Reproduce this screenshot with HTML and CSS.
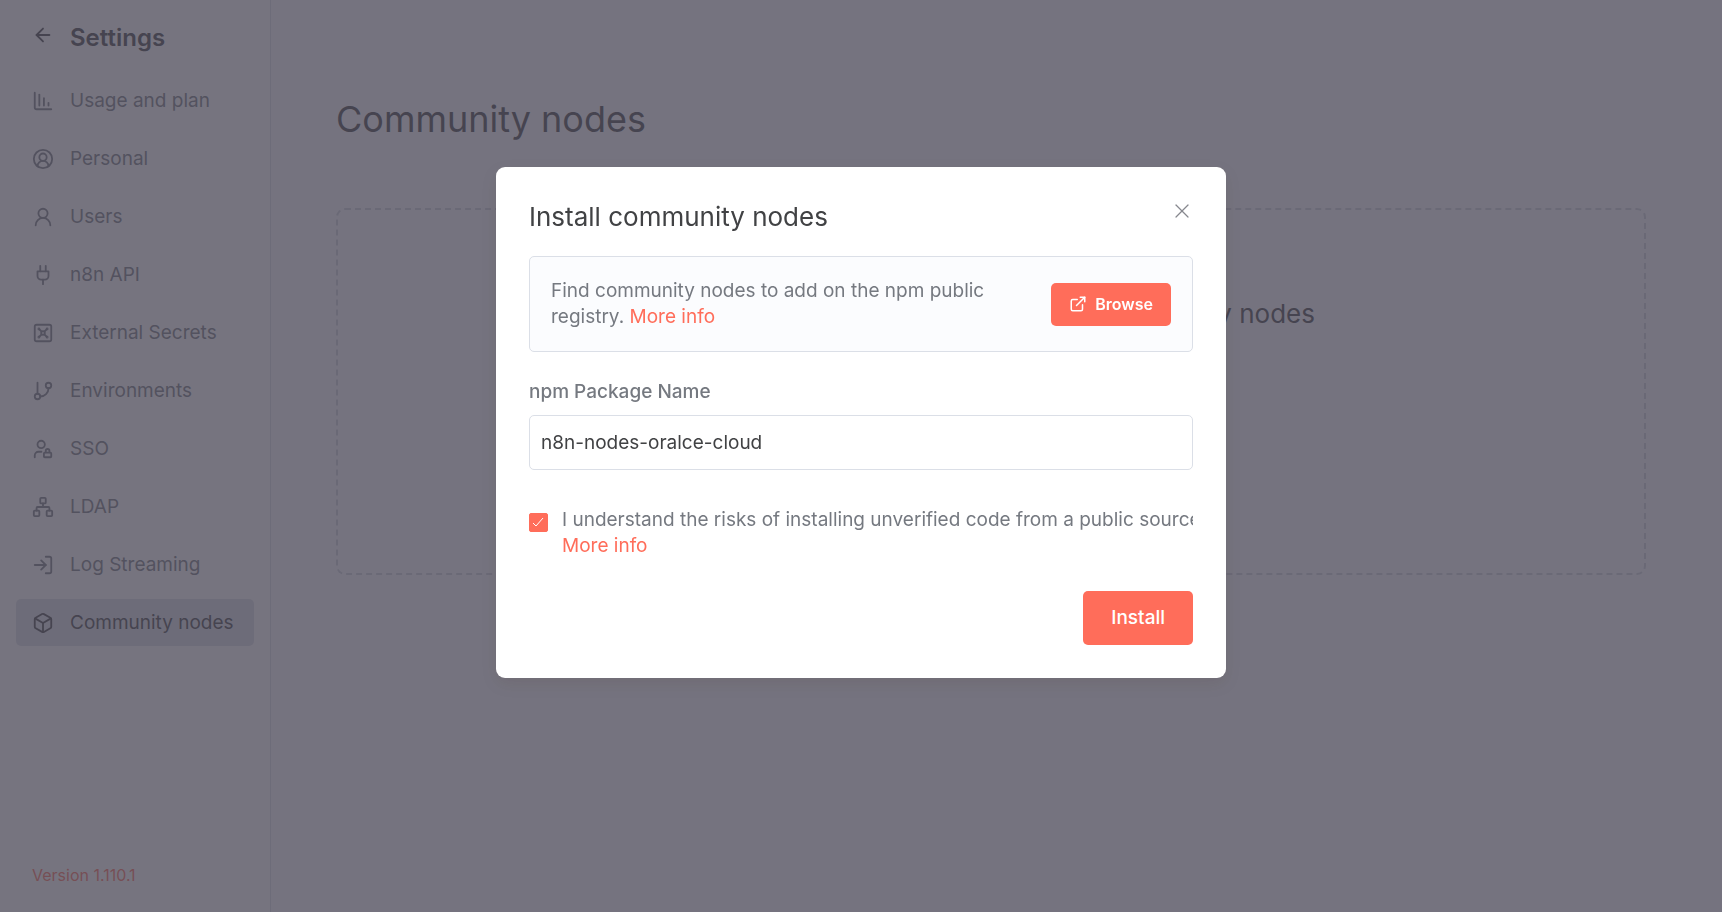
FILE: index.html
```html
<!DOCTYPE html>
<html lang="en">
<head>
<meta charset="utf-8">
<meta name="viewport" content="width=device-width, initial-scale=1">
<title>Community nodes - Settings</title>
<link rel="stylesheet" href="styles.css">
</head>
<body>
<div class="app">
  <aside class="sidebar">
    <header class="sidebar-header">
      <button class="icon-button" type="button" aria-label="Back">
        <svg class="icon" viewBox="0 0 24 24"><path d="m12 19-7-7 7-7"/><path d="M19 12H5"/></svg>
      </button>
      <h2 class="sidebar-title">Settings</h2>
    </header>
    <nav class="menu">
      <a class="menu-item" href="#"><svg class="icon" viewBox="0 0 24 24"><path d="M13 17V9"/><path d="M18 17v-3"/><path d="M3 3v16a2 2 0 0 0 2 2h16"/><path d="M8 17V5"/></svg>Usage and plan</a>
      <a class="menu-item" href="#"><svg class="icon" viewBox="0 0 24 24"><path d="M18 20a6 6 0 0 0-12 0"/><circle cx="12" cy="10" r="4"/><circle cx="12" cy="12" r="10"/></svg>Personal</a>
      <a class="menu-item" href="#"><svg class="icon" viewBox="0 0 24 24"><circle cx="12" cy="8" r="5"/><path d="M20 21a8 8 0 0 0-16 0"/></svg>Users</a>
      <a class="menu-item" href="#"><svg class="icon" viewBox="0 0 24 24"><path d="M12 22v-5"/><path d="M9 8V2"/><path d="M15 8V2"/><path d="M18 8v5a4 4 0 0 1-4 4h-4a4 4 0 0 1-4-4V8Z"/></svg>n8n API</a>
      <a class="menu-item" href="#"><svg class="icon" viewBox="0 0 24 24"><rect width="18" height="18" x="3" y="3" rx="2"/><circle cx="7.5" cy="7.5" r=".5"/><path d="m7.9 7.9 2.7 2.7"/><circle cx="16.5" cy="7.5" r=".5"/><path d="m13.4 10.6 2.7-2.7"/><circle cx="7.5" cy="16.5" r=".5"/><path d="m7.9 16.1 2.7-2.7"/><circle cx="16.5" cy="16.5" r=".5"/><path d="m13.4 13.4 2.7 2.7"/><circle cx="12" cy="12" r="2"/></svg>External Secrets</a>
      <a class="menu-item" href="#"><svg class="icon" viewBox="0 0 24 24"><path d="M6 3v12"/><circle cx="18" cy="6" r="3"/><circle cx="6" cy="18" r="3"/><path d="M18 9a9 9 0 0 1-9 9"/></svg>Environments</a>
      <a class="menu-item" href="#"><svg class="icon" viewBox="0 0 24 24"><circle cx="10" cy="7" r="4"/><path d="M10.3 15H7a4 4 0 0 0-4 4v2"/><path d="M15 15.5V14a2 2 0 0 1 4 0v1.5"/><rect width="8" height="5" x="13" y="16" rx=".9"/></svg>SSO</a>
      <a class="menu-item" href="#"><svg class="icon" viewBox="0 0 24 24"><rect x="16" y="16" width="6" height="6" rx="1"/><rect x="2" y="16" width="6" height="6" rx="1"/><rect x="9" y="2" width="6" height="6" rx="1"/><path d="M5 16v-3a1 1 0 0 1 1-1h12a1 1 0 0 1 1 1v3"/><path d="M12 12V8"/></svg>LDAP</a>
      <a class="menu-item" href="#"><svg class="icon" viewBox="0 0 24 24"><path d="m10 17 5-5-5-5"/><path d="M15 12H3"/><path d="M15 3h4a2 2 0 0 1 2 2v14a2 2 0 0 1-2 2h-4"/></svg>Log Streaming</a>
      <a class="menu-item menu-item-active" href="#" aria-current="page"><svg class="icon" viewBox="0 0 24 24"><path d="M21 8a2 2 0 0 0-1-1.73l-7-4a2 2 0 0 0-2 0l-7 4A2 2 0 0 0 3 8v8a2 2 0 0 0 1 1.73l7 4a2 2 0 0 0 2 0l7-4A2 2 0 0 0 21 16Z"/><path d="m3.3 7 8.7 5 8.7-5"/><path d="M12 22V12"/></svg>Community nodes</a>
    </nav>
    <a class="version" href="#">Version 1.110.1</a>
  </aside>
  <main class="content">
    <h1 class="page-title">Community nodes</h1>
    <section class="empty-state">
      <h2 class="empty-title">Supercharge your workflows with community nodes</h2>
    </section>
  </main>
</div>

<div class="overlay">
  <form class="modal" role="dialog" aria-modal="true" aria-labelledby="modal-title">
    <header class="modal-header">
      <h2 class="modal-title" id="modal-title">Install community nodes</h2>
      <button class="icon-button close" type="button" aria-label="Close">
        <svg class="icon" viewBox="0 0 22 22"><path d="m5 5 12 12"/><path d="M17 5 5 17"/></svg>
      </button>
    </header>
    <div class="notice">
      <p class="notice-text">Find community nodes to add on the npm public registry. <a class="link" href="#">More info</a></p>
      <button class="button button-browse" type="button">
        <svg class="icon" viewBox="0 0 24 24"><path d="M15 3h6v6"/><path d="M10 14 21 3"/><path d="M18 13v6a2 2 0 0 1-2 2H5a2 2 0 0 1-2-2V8a2 2 0 0 1 2-2h6"/></svg>
        Browse
      </button>
    </div>
    <label class="field-label" for="package">npm Package Name</label>
    <input class="field" id="package" type="text" value="n8n-nodes-oralce-cloud">
    <div class="consent">
      <span class="check">
        <input class="check-input" id="risks" type="checkbox" checked>
        <svg class="check-mark" viewBox="0 0 19 19"><path d="m4 10 3 3 7-8"/></svg>
      </span>
      <label class="consent-text" for="risks">I understand the risks of installing unverified code from a public source.<br><a class="link" href="#">More info</a></label>
    </div>
    <footer class="modal-footer">
      <button class="button button-install" type="submit">Install</button>
    </footer>
  </form>
</div>
</body>
</html>
```
FILE: styles.css
```css
* {
  box-sizing: border-box;
}

body {
  margin: 0;
  font-family: Inter, "Liberation Sans", sans-serif;
  font-size: 19px;
  line-height: 26px;
  color: #757980;
}

h1, h2, p {
  margin: 0;
  font-weight: 400;
}

a {
  text-decoration: none;
}

button, input {
  font: inherit;
  margin: 0;
}

.icon {
  width: 22px;
  height: 22px;
  flex: none;
  fill: none;
  stroke: currentColor;
  stroke-width: 2;
  stroke-linecap: round;
  stroke-linejoin: round;
}

.icon-button {
  display: flex;
  padding: 0;
  border: 0;
  background: none;
  color: inherit;
}

.app {
  display: flex;
  min-height: 100vh;
  background: #fbfcff;
}

.sidebar {
  display: flex;
  flex-direction: column;
  width: 271px;
  flex: none;
  padding: 22px 16px;
  background: #fff;
  border-right: 1px solid #dbdfe7;
}

.sidebar-header {
  display: flex;
  gap: 16px;
  padding: 2px 16px 0;
  color: #414244;
}

.sidebar-title {
  font-size: 24px;
  line-height: 28px;
  font-weight: 600;
}

.menu {
  display: flex;
  flex-direction: column;
  gap: 11px;
  padding-top: 25px;
}

.menu-item {
  display: flex;
  align-items: center;
  gap: 16px;
  height: 47px;
  padding: 0 16px;
  border-radius: 5px;
  color: #757980;
}

.menu-item-active {
  background: #dbdfe7;
  color: #414244;
}

.version {
  margin-top: auto;
  padding: 0 16px;
  font-size: 16px;
  line-height: 30px;
  color: #ff6d5a;
}

.content {
  flex: 1;
  padding: 96px 76px 0 65px;
  color: #414244;
}

.page-title {
  font-size: 36px;
  line-height: 46px;
}

.empty-state {
  min-height: 367px;
  margin-top: 66px;
  padding: 87px 32px 87px 40px;
  border: 2px dashed #d0d4dc;
  border-radius: 9px;
  text-align: center;
}

.empty-title {
  font-size: 26px;
  line-height: 34px;
}

.overlay {
  position: fixed;
  inset: 0;
  display: flex;
  justify-content: center;
  align-items: flex-start;
  padding-top: 167px;
  background: rgba(72, 69, 84, 0.75);
}

.modal {
  width: 730px;
  max-width: 100%;
  padding: 33px;
  border-radius: 9px;
  background: #fff;
  box-shadow: 0 6px 16px rgba(68, 28, 23, 0.1);
}

.modal-header {
  display: flex;
  justify-content: space-between;
  align-items: flex-start;
}

.modal-title {
  font-size: 26px;
  line-height: 34px;
  color: #414244;
}

.close {
  color: #86888e;
}

.close .icon {
  stroke-width: 1.2;
}

.notice {
  display: flex;
  justify-content: space-between;
  align-items: center;
  gap: 32px;
  margin-top: 22px;
  padding: 21px;
  border: 1px solid #dbdfe7;
  border-radius: 5px;
  background: #fbfcfe;
}

.link {
  color: #ff6d5a;
}

.button {
  display: flex;
  align-items: center;
  justify-content: center;
  border: 0;
  border-radius: 5px;
  background: #ff6d5a;
  color: #fff;
  font-weight: 600;
}

.button-browse {
  gap: 8px;
  height: 43px;
  padding: 0 18px;
  font-size: 16px;
}

.button-browse .icon {
  width: 18px;
  height: 18px;
}

.field-label {
  display: block;
  margin-top: 27px;
  font-weight: 500;
}

.field {
  display: block;
  width: 100%;
  height: 55px;
  margin-top: 10px;
  padding: 0 11px;
  border: 1px solid #dbdfe7;
  border-radius: 5px;
  background: #fff;
  color: #414244;
}

.consent {
  display: flex;
  gap: 14px;
  margin-top: 37px;
  overflow: hidden;
  white-space: nowrap;
}

.check {
  display: grid;
  flex: none;
  height: 19px;
  margin-top: 6px;
}

.check-input {
  grid-area: 1 / 1;
  width: 19px;
  height: 19px;
  appearance: none;
  border: 1px solid #ff6d5a;
  border-radius: 2px;
  background: #ff6d5a;
}

.check-mark {
  grid-area: 1 / 1;
  width: 19px;
  height: 19px;
  pointer-events: none;
  fill: none;
  stroke: #fff;
  stroke-width: 1;
}

.modal-footer {
  display: flex;
  justify-content: flex-end;
  margin-top: 32px;
}

.button-install {
  height: 54px;
  padding: 0 28px;
  font-weight: 500;
}
```
